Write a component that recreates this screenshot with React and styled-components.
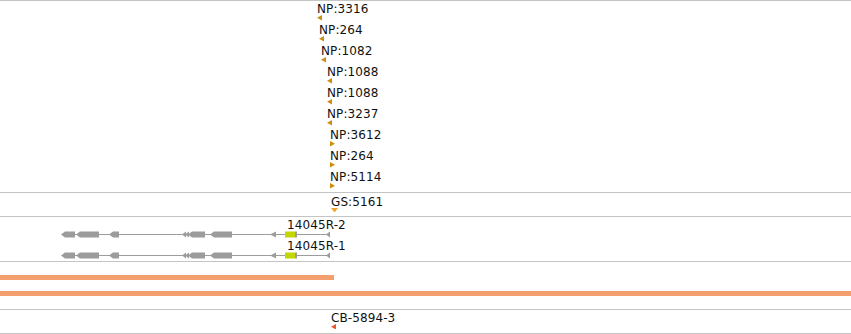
import React from "react";
import styled, { createGlobalStyle } from "styled-components";

const GlobalStyle = createGlobalStyle`
  html, body {
    margin: 0;
    padding: 0;
    background: #fff;
  }
  body {
    font-family: "DejaVu Sans", "Liberation Sans", sans-serif;
    color: #111;
  }
`;

const Browser = styled.div`
  width: 851px;
  height: 334px;
  overflow: hidden;
  display: flex;
  flex-direction: column;
`;

const Track = styled.div`
  border-top: 1px solid #c4c4c4;
  padding: ${(p) => p.$pad || "0"};
  display: flex;
  flex-direction: column;
  gap: ${(p) => p.$gap || 0}px;
  &:last-child {
    border-bottom: 1px solid #c4c4c4;
  }
`;

const Feature = styled.div`
  display: flex;
  flex-direction: column;
  align-items: flex-start;
  margin-left: ${(p) => p.$x}px;
  height: ${(p) => p.$h || 21}px;
`;

const Label = styled.span`
  display: block;
  font-size: 12px;
  line-height: 16px;
  height: 14px;
  white-space: nowrap;
  letter-spacing: 0.1px;
`;

const Bar = styled.div`
  height: 5px;
  width: ${(p) => p.$w};
  background: #f4a06e;
`;

const GeneRow = styled.div`
  display: flex;
  flex-direction: column;
`;

const GeneLabel = styled(Label)`
  margin-left: ${(p) => p.$x}px;
`;

const GeneSvg = styled.svg`
  display: block;
  width: 851px;
  height: 7px;
`;

const Arrow = ({ dir, color }) => {
  if (dir === "down") {
    return (
      <svg width="7" height="5" style={{ display: "block" }}>
        <polygon points="0,0 7,0 3.5,4.5" fill={color} />
      </svg>
    );
  }
  const pts = dir === "left" ? "0,2.75 5,0 5,5.5" : "0,0 5,2.75 0,5.5";
  return (
    <svg width="5" height="6" style={{ display: "block" }}>
      <polygon points={pts} fill={color} />
    </svg>
  );
};

const npFeatures = [
  { name: "NP:3316", x: 317, dir: "left" },
  { name: "NP:264", x: 319, dir: "left" },
  { name: "NP:1082", x: 321, dir: "left" },
  { name: "NP:1088", x: 327, dir: "left" },
  { name: "NP:1088", x: 327, dir: "left" },
  { name: "NP:3237", x: 327, dir: "left" },
  { name: "NP:3612", x: 330, dir: "right" },
  { name: "NP:264", x: 330, dir: "right" },
  { name: "NP:5114", x: 330, dir: "right" },
];

const GRAY = "#9c9c9c";

// exon with a pointed left end
const arrowExon = (x0, x1) =>
  `${x0},3.5 ${x0 + 4},0.5 ${x1},0.5 ${x1},6.5 ${x0 + 4},6.5`;
const tri = (x0, w) => `${x0},3.5 ${x0 + w},0.5 ${x0 + w},6.5`;

const GeneModel = () => (
  <GeneSvg viewBox="0 0 851 7">
    <rect x="75" y="3" width="253" height="1" fill={GRAY} />
    <polygon points={arrowExon(61, 75)} fill={GRAY} />
    <polygon points={arrowExon(76, 99)} fill={GRAY} />
    <polygon points={arrowExon(109, 119)} fill={GRAY} />
    <polygon points={tri(182, 4)} fill={GRAY} />
    <polygon points={tri(185, 4)} fill={GRAY} />
    <polygon points={arrowExon(188, 205)} fill={GRAY} />
    <polygon points={arrowExon(210, 232)} fill={GRAY} />
    <polygon points={tri(270, 6)} fill={GRAY} />
    <rect x="285" y="0.5" width="10" height="6" fill="#c4d600" />
    <rect x="295" y="0.5" width="2" height="6" fill={GRAY} />
    <polygon points={tri(326, 4)} fill={GRAY} />
  </GeneSvg>
);

const App = () => (
  <>
    <GlobalStyle />
    <Browser>
      <Track $pad="0 0 2px 0">
        {npFeatures.map((f, i) => (
          <Feature key={i} $x={f.x}>
            <Label>{f.name}</Label>
            <Arrow dir={f.dir} color="#cc8e0c" />
          </Feature>
        ))}
      </Track>
      <Track $pad="1px 0 4px 0">
        <Feature $x={331} $h={18}>
          <Label>GS:5161</Label>
          <Arrow dir="down" color="#f0a42c" />
        </Feature>
      </Track>
      <Track $pad="0 0 2px 0">
        <GeneRow>
          <GeneLabel $x={287}>14045R-2</GeneLabel>
          <GeneModel />
        </GeneRow>
        <GeneRow>
          <GeneLabel $x={287}>14045R-1</GeneLabel>
          <GeneModel />
        </GeneRow>
      </Track>
      <Track $pad="13px 0" $gap={11}>
        <Bar $w="334px" />
        <Bar $w="100%" />
      </Track>
      <Track $pad="0 0 4px 0">
        <Feature $x={331} $h={19}>
          <Label>CB-5894-3</Label>
          <Arrow dir="left" color="#f0542e" />
        </Feature>
      </Track>
    </Browser>
  </>
);

export default App;
